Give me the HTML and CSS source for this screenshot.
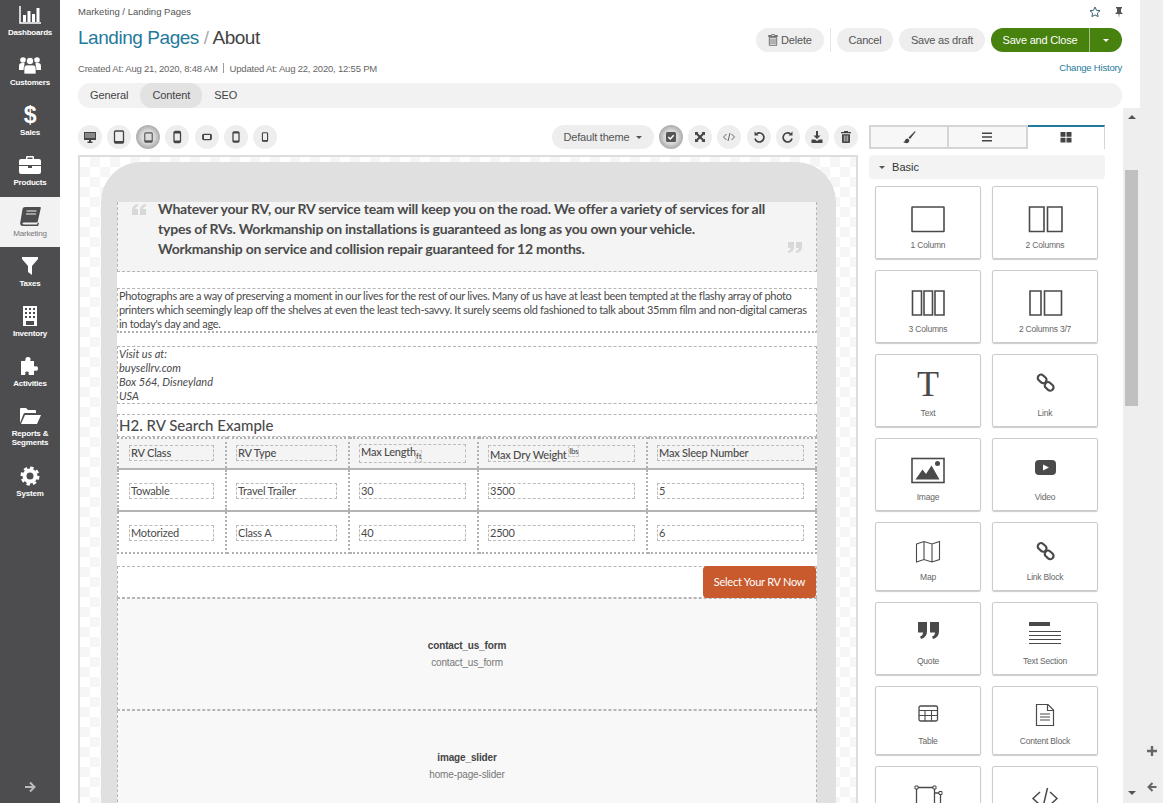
FILE: index.html
```html
<!DOCTYPE html>
<html lang="en">
<head>
  <meta charset="UTF-8">
  <meta name="viewport" content="width=device-width, initial-scale=1.0">
  <title>Landing Pages - About</title>
  <link rel="stylesheet" href="styles.css">
</head>
<body>
<div class="app">

  <!-- left navigation -->
  <nav class="sidebar">
    <ul class="nav-list">
      <li class="nav-item">
        <svg class="nav-icon" viewBox="0 0 24 20"><path d="M2 1v17h21" fill="none" stroke="#fff" stroke-width="1.5"/><path d="M5 10h3v7H5zM9.500 6h3v11h-3zM14 9h3v8h-3zM18.500 3h3v14h-3z" fill="#fff"/></svg>
        <span>Dashboards</span>
      </li>
      <li class="nav-item">
        <svg class="nav-icon" viewBox="0 0 24 20"><g fill="#fff"><circle cx="5" cy="5" r="2.800"/><circle cx="19" cy="5" r="2.800"/><circle cx="12" cy="6" r="3.800" stroke="#4d4d4f"/><path d="M1 15v-4q0-3 3-3h2.500q-.5 3 0 7zM23 15v-4q0-3-3-3h-2.500q.5 3 0 7z"/><path d="M6 19v-6q0-3 3-3h6q3 0 3 3v6z" stroke="#4d4d4f" stroke-width=".7"/></g></svg>
        <span>Customers</span>
      </li>
      <li class="nav-item">
        <span class="nav-dollar">$</span>
        <span>Sales</span>
      </li>
      <li class="nav-item">
        <svg class="nav-icon" viewBox="0 0 24 20"><path d="M8 4V2q0-1 1-1h6q1 0 1 1v2h-1.500V2.500h-5V4zM3 4h18q2 0 2 2v4H1V6q0-2 2-2zM1 11h9v2h4v-2h9v6q0 2-2 2H3q-2 0-2-2z" fill="#fff"/></svg>
        <span>Products</span>
      </li>
      <li class="nav-item nav-item-active">
        <svg class="nav-icon" viewBox="0 0 24 20"><path d="M7 1h15q1 0 .8 1l-3 13.500q-.2 1-1.300 1H6q-1.500 0-1.500 1T6 18.500h13l.5-1.500 1.500-.5-.8 3.500H5q-3 0-2.800-3L4.500 3Q5 1 7 1z" fill="#4d4d4f"/><path d="M8.500 5h10M8 8h10" stroke="#f2f2f2" stroke-width="1.200"/></svg>
        <span>Marketing</span>
      </li>
      <li class="nav-item">
        <svg class="nav-icon" viewBox="0 0 24 20"><path d="M4 1h16v2l-6 7v9l-4-3v-6L4 3z" fill="#fff"/></svg>
        <span>Taxes</span>
      </li>
      <li class="nav-item">
        <svg class="nav-icon" viewBox="0 0 24 20"><path fill-rule="evenodd" d="M5 0h14v20H5zM7 2v2h2V2zm4 0v2h2V2zm4 0v2h2V2zM7 6v2h2V6zm4 0v2h2V6zm4 0v2h2V6zM7 10v2h2v-2zm4 0v2h2v-2zm4 0v2h2v-2zM8 15v4h8v-4z" fill="#fff"/></svg>
        <span>Inventory</span>
      </li>
      <li class="nav-item">
        <svg class="nav-icon" viewBox="0 0 24 20"><path d="M10 1q3 0 2.500 3l-.5 1h4v5l1 .5q3-1 3 2t-3 2l-1 .5v4h-5l-.5-1.500q1-2-1.500-2t-1.500 2L7 19H3V5h4l.5-1Q7 1 10 1z" fill="#fff"/></svg>
        <span>Activities</span>
      </li>
      <li class="nav-item nav-item-tall">
        <svg class="nav-icon" viewBox="0 0 24 20"><path d="M2 17V3q0-1 1-1h5l2 2h7q1 0 1 1v2H7q-1 0-1.500 1z" fill="#fff"/><path d="M3 18l4-9h16l-4 9z" fill="#fff"/></svg>
        <span>Reports &amp; Segments</span>
      </li>
      <li class="nav-item">
        <svg class="nav-icon" viewBox="0 0 24 20"><circle cx="12" cy="10" r="5.500" fill="none" stroke="#fff" stroke-width="4"/><circle cx="12" cy="10" r="8.300" fill="none" stroke="#fff" stroke-width="2.400" stroke-dasharray="3.500 3"/></svg>
        <span>System</span>
      </li>
    </ul>
    <svg class="nav-expand" viewBox="0 0 12 12"><path d="M1 6h9M6 1.500 10.500 6 6 10.500" fill="none" stroke="#bbb" stroke-width="2"/></svg>
  </nav>

  <div class="main">
    <!-- page header -->
    <header class="page-head">
      <div class="crumb-row">
        <span class="crumbs">Marketing / Landing Pages</span>
        <span class="head-tools">
          <svg class="tool-star" viewBox="0 0 12 12"><path d="M6 1l1.500 3.300 3.500.4-2.600 2.400.7 3.500L6 8.900l-3.100 1.700.7-3.500L1 4.700l3.500-.4z" fill="none" stroke="#3d5f72"/></svg>
          <svg class="tool-pin" viewBox="0 0 12 12"><path d="M3 1h6v1L8 3v3l2 2H6.500L6 12l-.5-4H2l2-2V3L3 2z" fill="#555"/></svg>
        </span>
      </div>
      <div class="title-row">
        <h1 class="title"><a href="#">Landing Pages</a> <span class="title-sep">/</span> About</h1>
        <div class="actions">
          <button class="btn">
            <svg class="btn-icon" viewBox="0 0 10 12"><path d="M3.500 1.500V.7h3v.8H9.500v1H.5v-1zM1.300 3.300h7.400V11q0 .7-.7.7H2q-.7 0-.7-.7zM3 4.500V10.500M5 4.500V10.500M7 4.500V10.500" fill="none" stroke="#666" stroke-width=".9"/></svg>
            Delete
          </button>
          <span class="action-sep"></span>
          <button class="btn btn-cancel">Cancel</button>
          <button class="btn btn-draft">Save as draft</button>
          <div class="btn-split">
            <button class="btn-save">Save and Close</button>
            <button class="btn-caret"><span class="caret caret-white"></span></button>
          </div>
        </div>
      </div>
      <div class="meta-row">
        <span class="meta">Created At: Aug 21, 2020, 8:48 AM <i class="meta-sep"></i> Updated At: Aug 22, 2020, 12:55 PM</span>
        <a class="history" href="#">Change History</a>
      </div>
      <div class="tabs">
        <span class="tab">General</span>
        <span class="tab tab-active">Content</span>
        <span class="tab">SEO</span>
      </div>
    </header>

    <div class="editor">
      <div class="editor-body">
        <section class="builder">
          <div class="toolbar">
            <div class="tool-group">
              <span class="round"><svg viewBox="0 0 14 14" width="14" height="14"><path d="M1 2h12v8H8v1.500h1.500V13h-5v-1.500H6V10H1z" fill="#444"/><path d="M2 3h10v5H2z" fill="#888"/></svg></span>
              <span class="round"><svg viewBox="0 0 14 14" width="14" height="14"><rect x="2.500" y="1" width="9" height="12" rx="1" fill="none" stroke="#444" stroke-width="1.300"/><path d="M3 11h8v2H3z" fill="#444"/></svg></span>
              <span class="round round-on"><svg viewBox="0 0 14 14" width="13" height="13"><rect x="3" y="2" width="8" height="10" rx="1" fill="none" stroke="#555" stroke-width="1.200"/><path d="M3 10h8v2H3z" fill="#555"/></svg></span>
              <span class="round"><svg viewBox="0 0 14 14" width="14" height="14"><rect x="4" y="1.500" width="6.500" height="11" rx="1.200" fill="none" stroke="#444" stroke-width="1.300"/><path d="M4 2h6.500v1.500H4zM4 10.500h6.500V12H4z" fill="#444"/></svg></span>
              <span class="round"><svg viewBox="0 0 14 14" width="12" height="12"><rect x="2" y="4" width="10" height="6" rx="1.200" fill="none" stroke="#444" stroke-width="1.300"/><path d="M2 4h1.500v6H2zM10.500 4H12v6h-1.500z" fill="#444"/></svg></span>
              <span class="round"><svg viewBox="0 0 14 14" width="14" height="14"><rect x="4" y="2" width="6" height="10" rx="1" fill="none" stroke="#444" stroke-width="1.300"/><path d="M4 2h6v1.500H4zM4 10.500h6V12H4z" fill="#444"/></svg></span>
              <span class="round"><svg viewBox="0 0 14 14" width="12" height="12"><rect x="4" y="2" width="6" height="10" rx="1" fill="none" stroke="#444" stroke-width="1.300"/><path d="M4 10.500h6V12H4z" fill="#444"/></svg></span>
            </div>
            <div class="tool-group">
              <button class="theme-btn">Default theme <span class="caret"></span></button>
              <span class="round round-on"><svg viewBox="0 0 14 14" width="14" height="14"><rect x="2" y="2" width="10" height="10" rx="1.500" fill="#555"/><path d="M4.300 7l2 2 3.400-3.800" fill="none" stroke="#fff" stroke-width="1.500"/></svg></span>
              <span class="round"><svg viewBox="0 0 14 14" width="14" height="14"><path d="M2 2h3.500L4.500 3 7 5.500 9.500 3l-1-1H12v3.500l-1-1L8.500 7l2.500 2.500 1-1V12H8.500l1-1L7 8.500 4.500 11l1 1H2V8.500l1 1L5.500 7 3 4.500l-1 1z" fill="#444"/></svg></span>
              <span class="round"><svg viewBox="0 0 14 14" width="14" height="14"><path d="M4.500 4 1.500 7l3 3M9.500 4l3 3-3 3M8 3 6 11" fill="none" stroke="#555" stroke-width=".9"/></svg></span>
              <span class="round"><svg viewBox="0 0 14 14" width="14" height="14"><path d="M4.500 3.500A4.500 4.500 0 1 1 3 8" fill="none" stroke="#444" stroke-width="1.700" transform="translate(0 .5)"/><path d="M2.500 1.500v4h4z" fill="#444"/></svg></span>
              <span class="round"><svg viewBox="0 0 14 14" width="14" height="14"><path d="M9.500 3.500A4.500 4.500 0 1 0 11 8" fill="none" stroke="#444" stroke-width="1.700" transform="translate(0 .5)"/><path d="M11.500 1.500v4h-4z" fill="#444"/></svg></span>
              <span class="round"><svg viewBox="0 0 14 14" width="14" height="14"><path d="M6 1h2v4.500h2.500L7 9 3.500 5.500H6zM1.500 9.500H5L7 11l2-1.500h3.500V13h-11z" fill="#444"/></svg></span>
              <span class="round"><svg viewBox="0 0 14 14" width="14" height="14"><path d="M5 2V1h4v1h3v1.300H2V2zM3 4.300h8V12q0 1-1 1H4q-1 0-1-1z" fill="#444"/><path d="M5.300 5.500v6M7 5.500v6M8.700 5.500v6" stroke="#eee" stroke-width=".7"/></svg></span>
            </div>
          </div>

          <!-- device preview -->
          <div class="canvas">
            <div class="device">
              <div class="screen">
                <blockquote class="block quote">
                  <svg class="quote-open" viewBox="0 0 14 11"><path d="M0 6Q0 1 6 0v2Q3 3 3 5h3v6H0zM8 6q0-5 6-6v2q-3 1-3 3h3v6H8z" fill="#d8d8d8"/></svg>
                  <p>Whatever your RV, our RV service team will keep you on the road. We offer a variety of services for all types of RVs. Workmanship on installations is guaranteed as long as you own your vehicle. Workmanship on service and collision repair guaranteed for 12 months.</p>
                  <svg class="quote-close" viewBox="0 0 14 11"><path d="M14 5q0 5-6 6V9q3-1 3-3H8V0h6zM6 5q0 5-6 6V9q3-1 3-3H0V0h6z" fill="#d8d8d8"/></svg>
                </blockquote>

                <p class="block para para-thick">Photographs are a way of preserving a moment in our lives for the rest of our lives. Many of us have at least been tempted at the flashy array of photo printers which seemingly leap off the shelves at even the least tech-savvy. It surely seems old fashioned to talk about 35mm film and non-digital cameras in today's day and age.</p>

                <address class="block para addr">Visit us at:<br>buysellrv.com<br>Box 564, Disneyland<br>USA</address>

                <h2 class="block heading">H2. RV Search Example</h2>

                <table class="rv-table">
                  <thead>
                    <tr>
                      <th class="col-class"><span class="cell-box">RV Class</span></th>
                      <th class="col-type"><span class="cell-box">RV Type</span></th>
                      <th class="col-length"><span class="cell-box cell-box-sup">Max Length<sub class="unit">ft</sub></span></th>
                      <th class="col-weight"><span class="cell-box cell-box-sub">Max Dry Weight <sup class="unit">lbs</sup></span></th>
                      <th><span class="cell-box">Max Sleep Number</span></th>
                    </tr>
                  </thead>
                  <tbody>
                    <tr>
                      <td><span class="cell-box">Towable</span></td>
                      <td><span class="cell-box">Travel Trailer</span></td>
                      <td><span class="cell-box">30</span></td>
                      <td><span class="cell-box">3500</span></td>
                      <td><span class="cell-box">5</span></td>
                    </tr>
                    <tr>
                      <td><span class="cell-box">Motorized</span></td>
                      <td><span class="cell-box">Class A</span></td>
                      <td><span class="cell-box">40</span></td>
                      <td><span class="cell-box">2500</span></td>
                      <td><span class="cell-box">6</span></td>
                    </tr>
                  </tbody>
                </table>

                <div class="block cta-row"><a class="cta" href="#">Select Your RV Now</a></div>

                <div class="block widget">
                  <strong>contact_us_form</strong>
                  <span>contact_us_form</span>
                </div>
                <div class="block widget">
                  <strong>image_slider</strong>
                  <span>home-page-slider</span>
                </div>
              </div>
            </div>
          </div>
        </section>

        <!-- block palette -->
        <aside class="palette">
          <div class="panel-tabs">
            <span class="panel-tab"><svg viewBox="0 0 14 14" width="14" height="14"><path d="M13 1 6.500 7.500l1.500 1.500L13.500 2zM5.500 8.500Q3.500 8.500 3 10.500 2.500 12 1 12q3 2 5.500 .5 1.500-1.500.5-3z" fill="#444"/></svg></span>
            <span class="panel-tab"><svg viewBox="0 0 14 14" width="14" height="14"><path d="M2 2.500h10v1.400H2zM2 6.300h10v1.400H2zM2 10.100h10v1.400H2z" fill="#444"/></svg></span>
            <span class="panel-tab panel-tab-active"><svg viewBox="0 0 14 14" width="14" height="14"><path d="M1.500 1h5v4.700h-5zM7.500 1h5v4.700h-5zM1.500 6.800h5v4.700h-5zM7.500 6.800h5v4.700h-5z" fill="#444"/></svg></span>
          </div>
          <div class="panel-title"><span class="caret caret-small"></span> Basic</div>
          <div class="block-grid">
            <div class="card">
              <svg class="card-icon" viewBox="0 0 36 28"><rect x="2" y="2" width="32" height="24.500" rx=".5" fill="none" stroke="#4a4a4a" stroke-width="1.600"/></svg>
              <span>1 Column</span>
            </div>
            <div class="card">
              <svg class="card-icon" viewBox="0 0 36 28"><path d="M2.500 2h14.500v24.500H2.500zM20.500 2h14.500v24.500H20.500z" fill="none" stroke="#4a4a4a" stroke-width="1.600"/></svg>
              <span>2 Columns</span>
            </div>
            <div class="card">
              <svg class="card-icon" viewBox="0 0 36 28"><path d="M2.500 2h9v24h-9zM14 2h8.500v24H14zM25 2h9v24h-9z" fill="none" stroke="#4a4a4a" stroke-width="1.600"/></svg>
              <span>3 Columns</span>
            </div>
            <div class="card">
              <svg class="card-icon" viewBox="0 0 36 28"><path d="M3 2h11v24H3zM17.500 2h17v24h-17z" fill="none" stroke="#4a4a4a" stroke-width="1.600"/></svg>
              <span>2 Columns 3/7</span>
            </div>
            <div class="card">
              <span class="card-text-icon">T</span>
              <span>Text</span>
            </div>
            <div class="card">
              <svg class="card-icon" viewBox="0 0 36 28"><g fill="none" stroke="#4a4a4a" stroke-width="2.200"><rect x="10.500" y="2.500" width="9.500" height="6.500" rx="3.200" transform="rotate(42 15 5.700)"/><rect x="17.500" y="10" width="9.500" height="6.500" rx="3.200" transform="rotate(42 22 13.200)"/></g></svg>
              <span>Link</span>
            </div>
            <div class="card">
              <svg class="card-icon" viewBox="0 0 36 28"><rect x="2" y="1.500" width="32" height="24" fill="none" stroke="#4a4a4a" stroke-width="1.600"/><path d="M5.500 22.500l7-10 3.500 4.500 5.500-8.500 8 14z" fill="#4a4a4a"/><circle cx="27.500" cy="6.500" r="2.500" fill="#4a4a4a"/></svg>
              <span>Image</span>
            </div>
            <div class="card">
              <svg class="card-icon" viewBox="0 0 36 28"><rect x="8" y="3" width="21" height="15" rx="4" fill="#4a4a4a"/><path d="M16 7.500l6 3-6 3z" fill="#fff"/></svg>
              <span>Video</span>
            </div>
            <div class="card card-short">
              <svg class="card-icon" viewBox="0 0 36 28"><path d="M6.500 7l7.500-2.500 8 2.500 7.500-2.500v18L22 25l-8-2.500L6.500 25zM14 4.500v18M22 7v18" fill="none" stroke="#4a4a4a" stroke-width="1.100"/></svg>
              <span>Map</span>
            </div>
            <div class="card card-short">
              <svg class="card-icon" viewBox="0 0 36 28"><g fill="none" stroke="#4a4a4a" stroke-width="2.200"><rect x="10.500" y="7" width="9.500" height="6.500" rx="3.200" transform="rotate(42 15 10.200)"/><rect x="17.500" y="14.500" width="9.500" height="6.500" rx="3.200" transform="rotate(42 22 17.700)"/></g></svg>
              <span>Link Block</span>
            </div>
            <div class="card">
              <svg class="card-icon" viewBox="0 0 36 28"><path d="M8 1h9v9.500q0 6-6 7.500l-1-2.500q3-1 3-4H8zM20 1h9v9.500q0 6-6 7.500l-1-2.500q3-1 3-4h-5z" fill="#4a4a4a"/></svg>
              <span>Quote</span>
            </div>
            <div class="card">
              <svg class="card-icon" viewBox="0 0 36 28"><path d="M2 1h21v4H2z" fill="#4a4a4a"/><path d="M2 10.500h32M2 14.500h32M2 18.500h32M2 22.500h32" stroke="#4a4a4a" stroke-width="1.200"/></svg>
              <span>Text Section</span>
            </div>
            <div class="card card-short">
              <svg class="card-icon" viewBox="0 0 36 28"><rect x="9" y="5" width="18.500" height="15" rx="1.500" fill="none" stroke="#4a4a4a" stroke-width="1.300"/><path d="M9 9.500h18.500M9 14.500h18.500M15 9v11M21.500 9v11" stroke="#4a4a4a" stroke-width="1.100"/></svg>
              <span>Table</span>
            </div>
            <div class="card card-short">
              <svg class="card-icon" viewBox="0 0 36 28"><path d="M9.500 3.500h11.500l5.500 5.500v15.500h-17zM20.500 3.500v6h6M13 13h10M13 16h10M13 19h10" fill="none" stroke="#4a4a4a" stroke-width="1.200"/></svg>
              <span>Content Block</span>
            </div>
            <div class="card card-short">
              <svg class="card-icon" viewBox="0 0 36 28"><path d="M6.500 6.500h18v18h-18zM24.500 12h6v17" fill="none" stroke="#4a4a4a" stroke-width="1.300"/><path d="M5 5h3v3H5zM23 5h3v3h-3zM5 23h3v3H5zM23 23h3v3h-3zM29 10.500h3v3h-3z" fill="#fff" stroke="#4a4a4a"/></svg>
            </div>
            <div class="card card-short">
              <svg class="card-icon" viewBox="0 0 36 28"><path d="M13 11l-7 6.500 7 6.500M23 11l7 6.500-7 6.500M20.500 7l-5 21" fill="none" stroke="#4a4a4a" stroke-width="1.500"/></svg>
            </div>
          </div>
        </aside>
      </div>

      <div class="scrollbar">
        <span class="scroll-arrow scroll-up"></span>
        <span class="scroll-thumb"></span>
        <span class="scroll-arrow scroll-down"></span>
      </div>
    </div>
  </div>

  <!-- right rail -->
  <div class="rail">
    <svg class="rail-icon" viewBox="0 0 10 10"><path d="M3.800 0h2.400v3.800H10v2.400H6.200V10H3.800V6.200H0V3.800h3.800z" fill="#666"/></svg>
    <svg class="rail-icon" viewBox="0 0 10 10"><path d="M9.500 5H2M5.500 1 1.500 5l4 4" fill="none" stroke="#666" stroke-width="2"/></svg>
  </div>
</div>
</body>
</html>
```

FILE: styles.css
```css
* {
  box-sizing: border-box;
}

html, body {
  margin: 0;
  height: 100%;
  overflow: hidden;
}

body {
  font-family: "Liberation Sans", Arial, sans-serif;
  font-size: 11px;
  color: #444;
  background: #fff;
}

.app {
  display: flex;
  height: 803px;
  overflow: hidden;
}

/* sidebar */
.sidebar {
  width: 60px;
  flex: none;
  display: flex;
  flex-direction: column;
  justify-content: space-between;
  background: #4d4d4f;
  color: #fff;
}

.nav-list {
  list-style: none;
  margin: -4px 0 0;
  padding: 0;
}

.nav-item {
  height: 50px;
  padding-top: 9px;
  display: flex;
  flex-direction: column;
  align-items: center;
  text-align: center;
  font-size: 8px;
  font-weight: bold;
  letter-spacing: -.2px;
  line-height: 9px;
}

.nav-item-tall {
  height: 60px;
}

.nav-item-active {
  margin-top: 1px;
  background: #f2f2f2;
  color: #777;
  font-weight: normal;
}

.nav-icon {
  width: 24px;
  height: 20px;
  margin-bottom: 3px;
}

.nav-dollar {
  height: 20px;
  margin-bottom: 3px;
  font-size: 23px;
  line-height: 20px;
}

.nav-expand {
  width: 12px;
  height: 12px;
  margin: 0 auto 10px;
}

/* header */
.main {
  width: 1080px;
  flex: none;
  display: flex;
  flex-direction: column;
}

.page-head {
  padding: 0 18px;
  height: 108px;
  flex: none;
}

.crumb-row {
  display: flex;
  justify-content: space-between;
  height: 23px;
  padding-top: 6px;
  font-size: 9.5px;
  line-height: 11px;
  color: #555;
}

.head-tools {
  display: flex;
  gap: 12px;
  margin-right: -3px;
}

.tool-star, .tool-pin {
  width: 12px;
  height: 12px;
}

.title-row {
  display: flex;
  justify-content: space-between;
  height: 32px;
}

.title {
  margin: 3px 0 0;
  font-size: 19px;
  font-weight: normal;
  letter-spacing: -.45px;
  line-height: 24px;
  color: #444;
}

.title a {
  color: #1f7a9c;
  text-decoration: none;
}

.title-sep {
  color: #aaa;
}

.actions {
  display: flex;
  align-items: flex-start;
  padding-top: 5px;
  gap: 6px;
}

.btn, .theme-btn {
  height: 24px;
  border: 0;
  border-radius: 12px;
  background: #eee;
  color: #555;
  font: 11px "Liberation Sans", Arial, sans-serif;
  letter-spacing: -.2px;
}

.btn {
  width: 68px;
  padding: 0;
}

.btn-cancel {
  width: 56px;
}

.btn-draft {
  width: 86px;
}

.btn-icon {
  width: 10px;
  height: 12px;
  vertical-align: -2px;
}

.action-sep {
  width: 1px;
  height: 24px;
  background: #e6e6e6;
}

.btn-split {
  display: flex;
  height: 24px;
  width: 131px;
  border-radius: 12px;
  overflow: hidden;
  background: #47820f;
}

.btn-save, .btn-caret {
  border: 0;
  background: none;
  color: #fff;
  font: 11px "Liberation Sans", Arial, sans-serif;
  letter-spacing: -.2px;
  padding: 0;
}

.btn-save {
  width: 99px;
  border-right: 1px solid #a3c085;
}

.btn-caret {
  flex: 1;
}

.caret {
  display: inline-block;
  width: 0;
  height: 0;
  margin-left: 4px;
  vertical-align: 2px;
  border-left: 3.5px solid transparent;
  border-right: 3.5px solid transparent;
  border-top: 3.5px solid #555;
}

.caret-white {
  margin: 0;
  border-top-color: #fff;
}

.caret-small {
  margin: 0 4px 0 0;
}

.meta-row {
  display: flex;
  justify-content: space-between;
  height: 28px;
  padding-top: 6px;
  line-height: 16px;
  font-size: 9.5px;
  letter-spacing: -.2px;
  color: #666;
}

.meta-sep {
  display: inline-block;
  width: 1px;
  height: 10px;
  margin: 0 3px;
  vertical-align: -1px;
  background: #999;
}

.history {
  color: #1f7a9c;
  text-decoration: none;
  line-height: 14px;
}

.tabs {
  display: flex;
  height: 25px;
  border-radius: 12px;
  background: #f2f2f2;
  font-size: 11px;
  letter-spacing: -.1px;
  line-height: 25px;
}

.tab {
  padding: 0 12px;
  border-radius: 12px;
}

.tab-active {
  background: #e2e2e2;
}

/* editor */
.editor {
  display: flex;
  flex: 1;
  min-height: 0;
}

.editor-body {
  width: 1063px;
  display: flex;
  padding: 17px 18px 0;
  gap: 11px;
}

.builder {
  width: 780px;
  flex: none;
  display: flex;
  flex-direction: column;
}

.toolbar {
  display: flex;
  flex: none;
  justify-content: space-between;
  height: 30px;
}

.tool-group {
  display: flex;
  gap: 5.17px;
}

.round {
  width: 24px;
  height: 24px;
  display: flex;
  align-items: center;
  justify-content: center;
  border-radius: 50%;
  background: #eee;
}

.round-on {
  background: #ddd;
  border: 2px solid #b3b3b3;
  box-shadow: inset 0 0 4px #999;
}

.theme-btn {
  width: 102px;
}

.canvas {
  flex: none;
  height: 680px;
  padding: 5px 20px 0 21px;
  border: 2px solid #ddd;
  background: repeating-conic-gradient(#f6f6f6 0 25%, #fff 0 50%) 0 0 / 20px 20px;
}

.device {
  height: 100%;
  padding: 40px 19px 0 16px;
  border-radius: 40px 40px 0 0;
  background: #e0e0e0;
}

.screen {
  height: 100%;
  background: #fff;
  font-family: Lato, "Liberation Sans", sans-serif;
  color: #4a4a4a;
}

.block {
  margin: 0;
  border: 1px dashed #b5b5b5;
}

.quote {
  position: relative;
  display: flow-root;
  height: 70px;
  padding: 0 45px 0 40px;
  border-top: 0;
  background: #f4f4f4;
}

.quote p {
  margin: -3px 0 0;
  font-size: 14px;
  font-weight: 700;
  letter-spacing: -.22px;
  line-height: 20px;
}

.quote-open, .quote-close {
  position: absolute;
  width: 14px;
  height: 11px;
}

.quote-open {
  left: 14px;
  top: 2px;
}

.quote-close {
  right: 14px;
  bottom: 18px;
}

.para {
  font-size: 11px;
  line-height: 14px;
  padding: 0 1px;
}

.para-thick {
  margin-top: 16px;
  letter-spacing: -.3px;
  border-bottom: 2px dotted #b0b0b0;
}

.addr {
  margin-top: 13px;
  font-style: italic;
}

.heading {
  margin-top: 10px;
  height: 23px;
  font-size: 15px;
  font-weight: 500;
  line-height: 21px;
  padding-left: 1px;
}

.rv-table {
  width: 700px;
  table-layout: fixed;
  border-collapse: collapse;
  font-size: 11px;
  letter-spacing: -.2px;
}

.rv-table th, .rv-table td {
  border: 2px dotted #b0b0b0;
  padding: 0 11px 0 9px;
  text-align: left;
  font-weight: 400;
}

.rv-table th:first-child, .rv-table td:first-child {
  padding-left: 10px;
}

.rv-table th {
  height: 31px;
  padding-bottom: 1px;
  background: #f4f4f4;
  font-weight: 500;
}

.rv-table td {
  height: 42px;
  padding-top: 2px;
  border-top: 2px solid #b4b4b4;
}

.col-class { width: 108px; }
.col-type { width: 123px; }
.col-length { width: 129px; }
.col-weight { width: 169px; }

.cell-box {
  display: block;
  height: 16px;
  padding: 0 1px;
  border: 1px dashed #bbb;
  line-height: 14px;
}

.cell-box-sup {
  height: 19px;
  line-height: 13px;
}

.cell-box-sub {
  height: 17px;
  line-height: 17px;
}

.unit {
  font-size: 8px;
  line-height: 0;
  outline: 1px dashed #ccc;
}

.cta-row {
  margin-top: 12px;
  height: 32px;
  display: flex;
  justify-content: flex-end;
}

.cta {
  width: 113px;
  height: 32px;
  margin-top: -1px;
  border-radius: 4px;
  background: #c85a2e;
  color: #fff;
  text-align: center;
  text-decoration: none;
  font-size: 11px;
  letter-spacing: -.25px;
  line-height: 32px;
}

.widget {
  height: 112px;
  display: flex;
  flex-direction: column;
  align-items: center;
  justify-content: center;
  gap: 6px;
  background: #f8f8f8;
  font-family: "Liberation Sans", Arial, sans-serif;
  font-size: 10px;
  letter-spacing: -.15px;
  color: #777;
}

.widget strong {
  color: #444;
}

/* palette */
.palette {
  width: 236px;
  flex: none;
}

.panel-tabs {
  display: flex;
  height: 24px;
  margin-bottom: 6px;
}

.panel-tab {
  flex: 1;
  display: flex;
  align-items: center;
  justify-content: center;
  border: 2px solid #d5d5d5;
  background: #f7f7f7;
}

.panel-tab + .panel-tab {
  border-left: 0;
}

.panel-tab-active {
  background: #fff;
  border-top-color: #1f7a9c;
  border-bottom: 0;
  border-right-width: 1px;
}

.panel-title {
  height: 24px;
  padding-left: 10px;
  border-radius: 4px;
  background: #f3f3f3;
  font-size: 11px;
  line-height: 24px;
  color: #333;
}

.block-grid {
  display: grid;
  grid-template-columns: 106px 106px;
  gap: 11px;
  margin: 7px 0 0 6px;
}

.card {
  height: 73px;
  padding-top: 18px;
  display: flex;
  flex-direction: column;
  align-items: center;
  border: 1px solid #ccc;
  border-radius: 2px;
  box-shadow: 0 1px 1px #ccc;
  font-size: 8.5px;
  letter-spacing: -.2px;
  line-height: 10px;
  color: #666;
}

.card-short {
  height: 69px;
  padding-top: 14px;
}

.card-icon {
  width: 36px;
  height: 28px;
  margin-bottom: 7px;
  overflow: visible;
}

.card-text-icon {
  height: 28px;
  margin: -3px 0 10px;
  font-family: "Liberation Serif", serif;
  font-size: 36px;
  line-height: 28px;
  color: #4a4a4a;
}

/* scrollbars */
.scrollbar {
  width: 17px;
  display: flex;
  flex-direction: column;
  align-items: center;
  background: #eee;
}

.scroll-arrow {
  width: 0;
  height: 0;
  border-left: 4px solid transparent;
  border-right: 4px solid transparent;
}

.scroll-up {
  margin-top: 7px;
  border-bottom: 4px solid #555;
}

.scroll-thumb {
  width: 13px;
  height: 236px;
  margin-top: 51px;
  background: #c0c0c0;
}

.scroll-down {
  margin-top: auto;
  margin-bottom: 8px;
  border-top: 4px solid #555;
}

.rail {
  flex: 1;
  display: flex;
  flex-direction: column;
  justify-content: flex-end;
  align-items: center;
  gap: 26px;
  padding-bottom: 11px;
  background: #eee;
}

.rail-icon {
  width: 10px;
  height: 10px;
}
```
